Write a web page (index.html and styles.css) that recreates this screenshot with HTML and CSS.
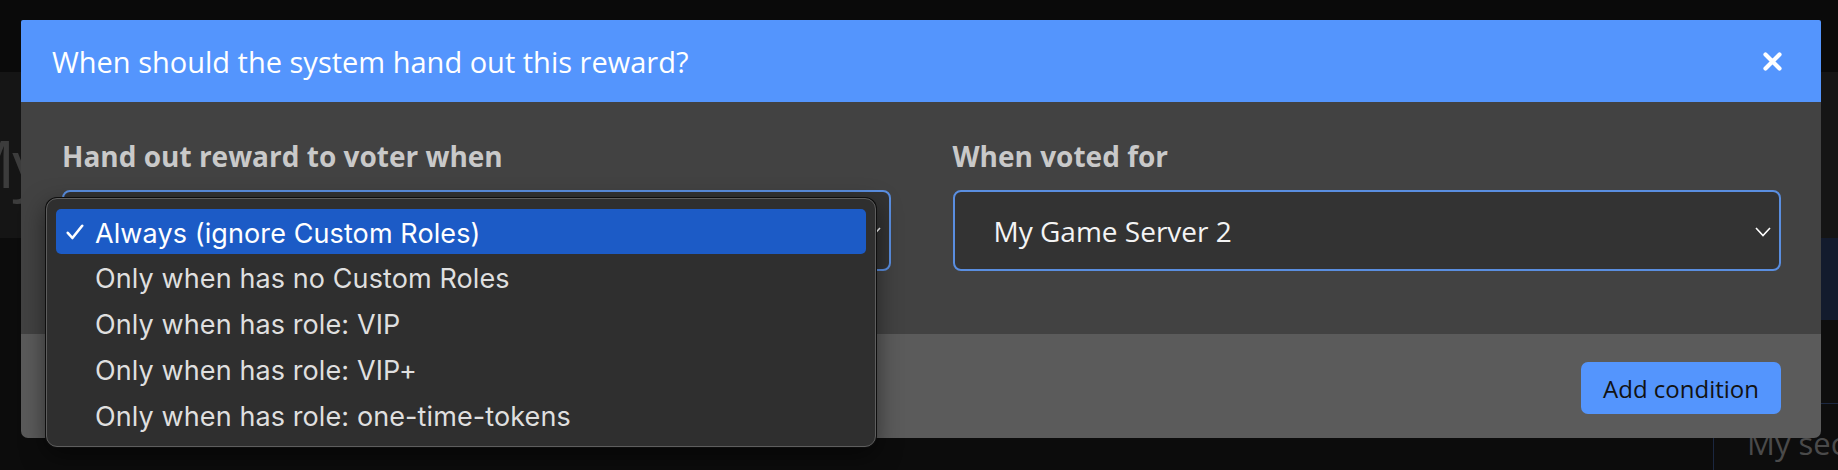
FILE: index.html
```html
<!DOCTYPE html>
<html lang="en">
<head>
<meta charset="utf-8">
<title>Reward condition</title>
<link rel="stylesheet" href="styles.css">
</head>
<body>
<div class="page">
  <div class="topbar"></div>
  <div class="hero"><h1 class="hero-title">My Servers</h1></div>
  <div class="content">
    <div class="main"></div>
    <aside class="side">
      <div class="side-head"></div>
      <div class="side-gap"></div>
      <div class="side-row"><span class="side-text">My second</span></div>
    </aside>
  </div>
</div>

<div class="modal">
  <div class="modal-header">
    <h2 class="modal-title">When should the system hand out this reward?</h2>
    <button class="close" aria-label="Close">
      <svg width="19" height="19" viewBox="0 0 19 19"><path d="M2.5 2.5 L16.5 16.5 M16.5 2.5 L2.5 16.5" stroke="#fff" stroke-width="4.2" stroke-linecap="round" fill="none"/></svg>
    </button>
  </div>
  <div class="modal-body">
    <div class="field">
      <label class="field-label">Hand out reward to voter when</label>
      <div class="select">
        <span class="select-value">Always (ignore Custom Roles)</span>
        <svg class="chev" width="16" height="10" viewBox="0 0 16 10"><path d="M1 1 L8 8.5 L15 1" stroke="#fff" stroke-width="1.6" fill="none"/></svg>
      </div>
    </div>
    <div class="field">
      <label class="field-label">When voted for</label>
      <div class="select">
        <span class="select-value">My Game Server 2</span>
        <svg class="chev" width="16" height="10" viewBox="0 0 16 10"><path d="M1 1 L8 8.5 L15 1" stroke="#fff" stroke-width="1.6" fill="none"/></svg>
      </div>
    </div>
  </div>
  <div class="modal-footer">
    <button class="btn-primary">Add condition</button>
  </div>
</div>

<ul class="menu">
  <li class="menu-item selected">
    <svg class="check" width="18" height="16" viewBox="0 0 18 16"><path d="M1.8 8.8 L6.4 14 L16.2 1.8" stroke="#fff" stroke-width="2.6" fill="none" stroke-linecap="round" stroke-linejoin="round"/></svg>
    Always (ignore Custom Roles)
  </li>
  <li class="menu-item">Only when has no Custom Roles</li>
  <li class="menu-item">Only when has role: VIP</li>
  <li class="menu-item">Only when has role: VIP+</li>
  <li class="menu-item">Only when has role: one-time-tokens</li>
</ul>
</body>
</html>
```
FILE: styles.css
```css
* { box-sizing: border-box; }

html, body {
  margin: 0;
  padding: 0;
}

body {
  width: 1838px;
  height: 470px;
  overflow: hidden;
  background: #0b0b0b;
  font-family: "Open Sans", "Noto Sans", sans-serif;
  position: relative;
}

/* background page (dimmed by overlay) */
.page {
  display: flex;
  flex-direction: column;
  height: 470px;
}
.topbar {
  height: 72px;
  background: #0a0a0a;
}
.hero {
  height: 166px;
  background: #151515;
  padding-top: 45px;
  overflow: hidden;
}
.hero-title {
  margin: 0 0 0 -44px;
  font-size: 66px;
  font-weight: 400;
  letter-spacing: -3px;
  color: #3c3c3c;
  line-height: 90px;
  white-space: nowrap;
}
.content {
  flex: 1;
  display: flex;
}
.main {
  flex: 1;
  background: #0c0c0c;
}
.side {
  width: 125px;
  display: flex;
  flex-direction: column;
}
.side-head {
  height: 82px;
  background: #131b2d;
}
.side-gap {
  height: 83px;
  background: #0e0e0e;
}
.side-row {
  flex: 1;
  border-top: 1px solid #1b2740;
  border-left: 1px solid #1b2740;
  padding: 18px 0 0 33px;
  background: #0d0d0d;
}
.side-text {
  font-size: 31px;
  color: #4a4a4a;
  white-space: nowrap;
}

/* modal */
.modal {
  position: absolute;
  left: 21px;
  top: 20px;
  width: 1800px;
  display: flex;
  flex-direction: column;
  border-radius: 2px 2px 7px 7px;
  overflow: hidden;
}
.modal-header {
  height: 82px;
  background: #5495fd;
  display: flex;
  align-items: center;
  justify-content: space-between;
  padding: 0 39px 0 31px;
}
.modal-title {
  margin: 0;
  font-size: 29px;
  font-weight: 400;
  color: #fff;
}
.close {
  border: 0;
  background: none;
  padding: 0;
  width: 19px;
  height: 19px;
  display: flex;
  margin-top: 1px;
}
.modal-body {
  background: #424242;
  display: grid;
  grid-template-columns: 1fr 1fr;
  column-gap: 62px;
  padding: 35px 40px 63px 41px;
}
.field {
  display: flex;
  flex-direction: column;
  gap: 15px;
}
.field-label {
  font-size: 28px;
  font-weight: 700;
  color: #c9c9c9;
  line-height: 38px;
}
.select {
  height: 81px;
  border: 2px solid #5a8ee0;
  border-radius: 8px;
  background: #333333;
  display: flex;
  align-items: center;
  justify-content: space-between;
  padding: 0 8px 0 39px;
}
.select-value {
  font-size: 28px;
  color: #f4f4f4;
  line-height: 38px;
}
.chev {
  margin-top: 2px;
}
.modal-footer {
  background: #5b5b5b;
  height: 104px;
  display: flex;
  justify-content: flex-end;
  align-items: flex-start;
  padding: 28px 40px 24px;
}
.btn-primary {
  width: 200px;
  height: 52px;
  border: 0;
  border-radius: 7px;
  background: #5495fd;
  color: #121212;
  font-family: "Open Sans", sans-serif;
  font-size: 24px;
  padding: 0;
}

/* native-like popup menu */
.menu {
  position: absolute;
  left: 46px;
  top: 198px;
  width: 830px;
  height: 249px;
  margin: 0;
  padding: 9px 9px;
  list-style: none;
  background: #2f2f2f;
  border: 1px solid #5e5e5e;
  border-radius: 11px;
  box-shadow: 0 0 0 1px #0e0e0e, 0 8px 24px rgba(0,0,0,0.5);
  font-family: Inter, "Noto Sans", sans-serif;
}
.menu-item {
  position: relative;
  height: 46px;
  padding: 3px 0 0 39px;
  display: flex;
  align-items: center;
  font-size: 27px;
  letter-spacing: 0.1px;
  color: #dfdfdf;
  border-radius: 5px;
  white-space: nowrap;
}
.menu-item.selected {
  background: #1c5bc6;
  color: #ffffff;
  height: 45px;
  margin-top: 1px;
}
.check {
  position: absolute;
  left: 10px;
  top: 15px;
}
```
